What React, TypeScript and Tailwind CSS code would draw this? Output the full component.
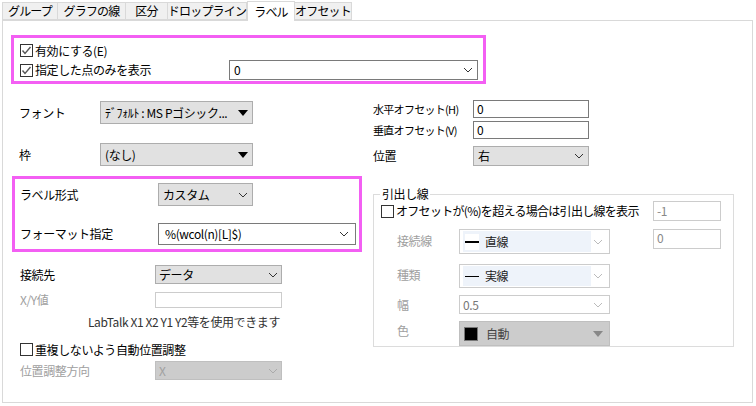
import React from "react";

const Chev = ({ c = "#333" }: { c?: string }) => (
  <svg width="10" height="6" viewBox="0 0 10 6" className="shrink-0"><polyline points="1,1 5,5 9,1" fill="none" stroke={c} strokeWidth="1" /></svg>
);
const Tri = ({ c = "#000" }: { c?: string }) => (
  <svg width="10" height="6" viewBox="0 0 10 6" className="shrink-0"><polygon points="0,0 10,0 5,6" fill={c} /></svg>
);
const Check = ({ on }: { on?: boolean }) => (
  <span className="w-[13px] h-[13px] border border-[#333] bg-white inline-flex items-center justify-center shrink-0 mr-[2px]">
    {on && <svg width="11" height="11" viewBox="0 0 11 11"><polyline points="1.5,5.5 4,8.5 9.5,2" fill="none" stroke="#555" strokeWidth="1.4" /></svg>}
  </span>
);

export default function App() {
  const tabs = ["グループ", "グラフの線", "区分", "ドロップライン", "ラベル", "オフセット"];
  const widths = [56, 68, 42, 79, 48, 57];
  return (
    <div className="w-[756px] h-[406px] bg-white text-[12px] text-black overflow-hidden whitespace-nowrap tracking-[-0.4px]" style={{ fontFamily: '"Noto Sans CJK JP", "Noto Sans", sans-serif' }}>
      <div className="flex h-[20px] items-end pl-[2px]">
        {tabs.map((t, i) => (
          <div key={t} style={{ width: widths[i] }}
            className={i === 4 ? "h-[20px] bg-white border border-b-0 border-[#d9d9d9] flex items-center justify-center leading-none relative top-[1px] z-10 tracking-[-0.8px]" : "h-[18px] bg-[#f0f0f0] border border-[#d9d9d9] border-l-0 first:border-l flex items-center justify-center leading-none tracking-[-0.8px]"}>
            {t}
          </div>
        ))}
      </div>
      <div className="ml-[2px] w-[751px] h-[383px] border border-[#d9d9d9] bg-white">
        <div className="mt-[14px] ml-[8px] w-[475px] h-[49px] border-[3px] border-[#f35ff3] pl-[6px] pt-[5px]">
          <div className="flex items-center h-[15px]"><Check on />有効にする(E)</div>
          <div className="flex items-center h-[22px] mt-[1px]">
            <Check on /><span className="w-[194px]">指定した点のみを表示</span>
            <div className="w-[249px] h-[20px] border border-[#7a7a7a] flex items-center justify-between px-[4px]"><span>0</span><Chev /></div>
          </div>
        </div>
        <div className="flex">
          <div className="ml-[8px] w-[351px] flex flex-col">
            <div className="mt-[17px] h-[23px] flex items-center pl-[8px]">
              <span className="w-[81px]">フォント</span>
              <div className="w-[153px] h-[23px] bg-[#e1e1e1] border border-[#adadad] flex items-center justify-between px-[4px]"><span>ﾃﾞﾌｫﾙﾄ : MS Pゴシック...</span><Tri /></div>
            </div>
            <div className="mt-[19px] h-[23px] flex items-center pl-[8px]">
              <span className="w-[81px]">枠</span>
              <div className="w-[153px] h-[23px] bg-[#e1e1e1] border border-[#adadad] flex items-center justify-between px-[4px]"><span>(なし)</span><Tri /></div>
            </div>
            <div className="mt-[10px] ml-[1px] w-[350px] h-[76px] border-[3px] border-[#f35ff3] pl-[5px] pt-[4px]">
              <div className="h-[23px] flex items-center">
                <span className="w-[138px]">ラベル形式</span>
                <div className="w-[95px] h-[23px] bg-[#e1e1e1] border border-[#adadad] flex items-center justify-between px-[4px]"><span>カスタム</span><Chev /></div>
              </div>
              <div className="mt-[17px] h-[22px] flex items-center">
                <span className="w-[138px]">フォーマット指定</span>
                <div className="w-[198px] h-[22px] bg-white border border-[#7a7a7a] flex items-center justify-between px-[6px]"><span>%(wcol(n)[L]$)</span><Chev /></div>
              </div>
            </div>
            <div className="mt-[13px] h-[19px] flex items-center pl-[9px]">
              <span className="w-[135px]">接続先</span>
              <div className="w-[127px] h-[19px] bg-[#e1e1e1] border border-[#adadad] flex items-center justify-between px-[3px]"><span>データ</span><Chev /></div>
            </div>
            <div className="mt-[8px] h-[16px] flex items-center pl-[9px] text-[#a0a0a0]">
              <span className="w-[135px]">X/Y値</span>
              <div className="w-[127px] h-[16px] bg-white border border-[#cccccc]" />
            </div>
            <div className="mt-[6px] pl-[77px] h-[16px] leading-[16px] text-[#333]">LabTalk X1 X2 Y1 Y2等を使用できます</div>
            <div className="mt-[12px] h-[15px] flex items-center pl-[9px]"><Check />重複しないよう自動位置調整</div>
            <div className="mt-[4px] h-[19px] flex items-center pl-[9px] text-[#a0a0a0]">
              <span className="w-[135px]">位置調整方向</span>
              <div className="w-[127px] h-[19px] bg-[#cccccc] border border-[#bfbfbf] flex items-center justify-between px-[3px]"><span>X</span><Chev c="#aaa" /></div>
            </div>
          </div>
          <div className="ml-[11px] w-[362px] flex flex-col">
            <div className="mt-[16px] h-[18px] flex items-center">
              <span className="w-[100px] text-[11px] tracking-[-0.7px]">水平オフセット(H)</span>
              <div className="w-[116px] h-[18px] border border-[#7a7a7a] px-[3px] leading-[16px]">0</div>
            </div>
            <div className="mt-[3px] h-[18px] flex items-center">
              <span className="w-[100px] text-[11px] tracking-[-0.7px]">垂直オフセット(V)</span>
              <div className="w-[116px] h-[18px] border border-[#7a7a7a] px-[3px] leading-[16px]">0</div>
            </div>
            <div className="mt-[7px] h-[20px] flex items-center">
              <span className="w-[100px]">位置</span>
              <div className="w-[116px] h-[20px] bg-[#e1e1e1] border border-[#adadad] flex items-center justify-between px-[4px]"><span>右</span><Chev /></div>
            </div>
            <div className="mt-[28px] h-[153px] w-[361px] border border-[#dcdcdc] relative pl-[7px]">
              <span className="absolute -top-[9px] left-[6px] bg-white px-[2px] leading-[16px]">引出し線</span>
              <div className="mt-[5px] h-[22px] flex items-center">
                <Check /><span className="w-[257px] tracking-[-0.7px]">オフセットが(%)を超える場合は引出し線を表示</span>
                <div className="w-[68px] h-[20px] border border-[#cccccc] text-[#888] px-[3px] leading-[18px]">-1</div>
              </div>
              <div className="mt-[7px] h-[25px] flex items-start text-[#a0a0a0] pl-[16px]">
                <span className="w-[62px] mt-[3px]">接続線</span>
                <div className="w-[151px] h-[25px] border border-[#cccccc] flex items-center justify-between pl-[3px] pr-[6px]">
                  <div className="w-[128px] h-[21px] bg-[#eef3fa] flex items-center text-[#222] gap-[6px] pl-[2px]"><span className="w-[14px] h-[16px] bg-white flex items-center"><span className="w-[14px] h-[2px] bg-black" /></span>直線</div><Chev c="#bbb" />
                </div>
                <div className="ml-[43px] w-[68px] h-[20px] border border-[#cccccc] text-[#888] px-[3px] leading-[16px]">0</div>
              </div>
              <div className="mt-[10px] h-[24px] flex items-start text-[#a0a0a0] pl-[16px]">
                <span className="w-[62px] mt-[2px]">種類</span>
                <div className="w-[151px] h-[24px] border border-[#cccccc] flex items-center justify-between pl-[3px] pr-[6px]">
                  <div className="w-[128px] h-[20px] bg-[#eef3fa] flex items-center text-[#222] gap-[6px] pl-[2px]"><span className="w-[14px] h-[1px] bg-black" />実線</div><Chev c="#bbb" />
                </div>
              </div>
              <div className="mt-[7px] h-[19px] flex items-center text-[#a0a0a0] pl-[16px]">
                <span className="w-[62px]">幅</span>
                <div className="w-[151px] h-[19px] border border-[#cccccc] flex items-center justify-between px-[3px] pr-[6px] text-[#777]"><span>0.5</span><Chev c="#bbb" /></div>
              </div>
              <div className="mt-[7px] h-[25px] flex items-center text-[#a0a0a0] pl-[16px]">
                <span className="w-[62px] -mt-[6px]">色</span>
                <div className="w-[151px] h-[25px] bg-[#cccccc] border border-[#bfbfbf] flex items-center justify-between pl-[4px] pr-[6px] text-[#444]">
                  <span className="flex items-center gap-[8px]"><span className="w-[14px] h-[14px] bg-black border border-[#777]" />自動</span><Tri c="#888" />
                </div>
              </div>
            </div>
          </div>
        </div>
      </div>
    </div>
  );
}
